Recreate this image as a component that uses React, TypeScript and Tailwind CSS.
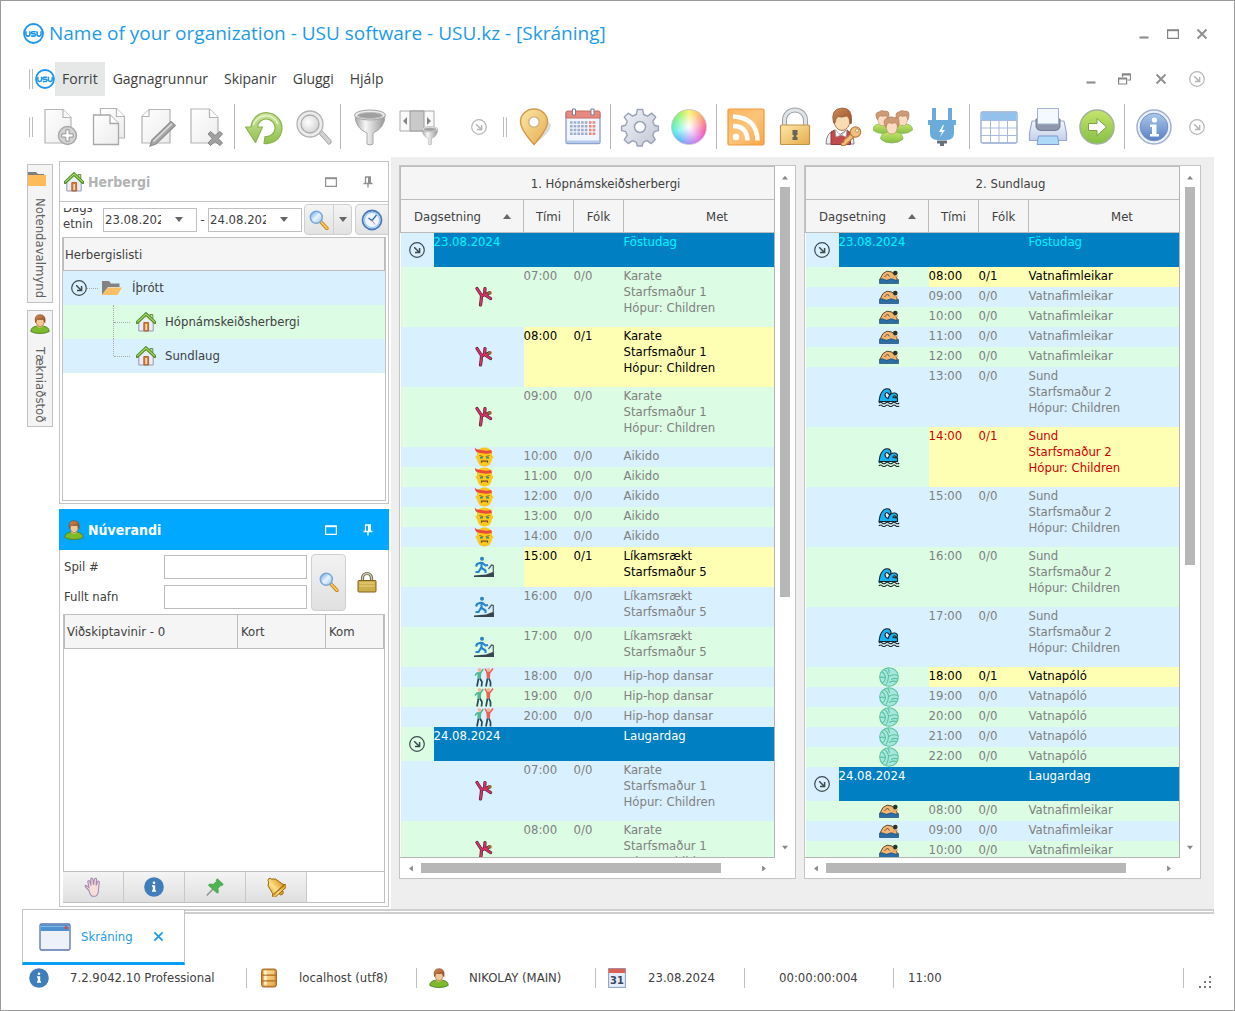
import React from 'react';
import clsx from 'clsx';

type IconProps = { className?: string };

/* ---------- small glyphs ---------- */

const UsuLogo = ({ className = 'size-5' }: IconProps) => (
  <svg viewBox="0 0 20 20" className={className} aria-hidden="true">
    <circle cx="10" cy="10" r="9" fill="#fff" stroke="#1e96ee" strokeWidth="1.8" />
    <g fill="none" stroke="#1e96ee" strokeWidth="1.5">
      <path d="M2.8 7.8v3q0 1.7 1.9 1.7t1.9-1.7v-3" />
      <path d="M12.2 8.3H9.2q-1.4.1-1.3 1.1t1.3.9h1.4q1.5.1 1.4 1.1t-1.4 1.1H7.8" />
      <path d="M13.4 7.8v3q0 1.7 1.9 1.7t1.9-1.7v-3" />
    </g>
  </svg>
);

const CircleArrow = ({ className = 'size-4 text-[#b5b5b5]' }: IconProps) => (
  <svg viewBox="0 0 16 16" className={className} fill="none" stroke="currentColor" aria-hidden="true">
    <circle cx="8" cy="8" r="7.3" strokeWidth="1.2" />
    <path d="M5.2 5.2l5 5M10.6 6v4.6H6" strokeWidth="1.5" />
  </svg>
);

const Minimize = () => (
  <svg viewBox="0 0 12 12" className="size-3" aria-hidden="true"><path d="M1.5 9.5h9" stroke="#909090" strokeWidth="2.2" /></svg>
);

const Maximize = ({ className = 'w-3 h-[10px]' }: IconProps) => (
  <svg viewBox="0 0 12 10" className={className} fill="none" stroke="currentColor" aria-hidden="true">
    <path d="M.6 1.5v7.9h10.8V1.5" strokeWidth="1.2" /><path d="M0 1.2h12" strokeWidth="2" />
  </svg>
);

const Restore = () => (
  <svg viewBox="0 0 13 12" className="h-3 w-[13px]" fill="none" stroke="#858585" aria-hidden="true">
    <path d="M4.5 4V1h8v6H9.5" strokeWidth="1.2" /><path d="M4 1.4h9M0 5.4h9" strokeWidth="2" />
    <path d="M.6 5v6h8V5" strokeWidth="1.2" />
  </svg>
);

const Close = ({ className = 'size-3 text-[#909090]' }: IconProps) => (
  <svg viewBox="0 0 12 12" className={className} stroke="currentColor" aria-hidden="true">
    <path d="M1.5 1.5l9 9M10.5 1.5l-9 9" strokeWidth="2" />
  </svg>
);

const Pin = ({ className = 'text-[#909090]' }: IconProps) => (
  <svg viewBox="0 0 10 12" className={clsx('h-3 w-[10px]', className)} aria-hidden="true">
    <path d="M2 1h6M2.500 1v6M.5 7.500h9M5 8v3.500" stroke="currentColor" strokeWidth="1.300" fill="none" />
    <path d="M5 1h3v6H5z" fill="currentColor" />
  </svg>
);

const Arrow = ({ className = 'w-2' }: IconProps) => (
  <svg viewBox="0 0 8 5" className={clsx('h-[5px] shrink-0', className)} aria-hidden="true"><path d="M0 0h8L4 5z" fill="currentColor" /></svg>
);

/* ---------- coloured icons ---------- */

const Defs = () => (
  <svg className="absolute size-0" aria-hidden="true">
    <defs>
      <linearGradient id="page" x2="1" y2="1"><stop stopColor="#fff" /><stop offset="1" stopColor="#ececec" /></linearGradient>
      <linearGradient id="steel"><stop stopColor="#a5a5a5" /><stop offset=".35" stopColor="#f6f6f6" /><stop offset="1" stopColor="#969696" /></linearGradient>
      <linearGradient id="green" x2="0" y2="1"><stop stopColor="#cde4a0" /><stop offset="1" stopColor="#8fc04c" /></linearGradient>
      <linearGradient id="gold" x2="1" y2="1"><stop stopColor="#fde7a8" /><stop offset="1" stopColor="#e5ad4d" /></linearGradient>
      <linearGradient id="bell" x2="1"><stop stopColor="#e9a51f" /><stop offset=".4" stopColor="#ffe28a" /><stop offset="1" stopColor="#d48a12" /></linearGradient>
      <linearGradient id="orange" x2="1" y2="1"><stop stopColor="#fdb45c" /><stop offset=".5" stopColor="#fbc57b" /><stop offset="1" stopColor="#fca445" /></linearGradient>
      <linearGradient id="blue" x2="0" y2="1"><stop stopColor="#a9c8ec" /><stop offset="1" stopColor="#5a80c4" /></linearGradient>
      <linearGradient id="gear" x2="1" y2="1"><stop stopColor="#f1f3f8" /><stop offset="1" stopColor="#bfc6d3" /></linearGradient>
      <linearGradient id="lens" x2="1" y2="1"><stop stopColor="#5e9be0" /><stop offset=".5" stopColor="#e6f5ff" /><stop offset="1" stopColor="#8fc1ef" /></linearGradient>
      <linearGradient id="lime" x2="0" y2="1"><stop stopColor="#c5e46a" /><stop offset="1" stopColor="#86bf45" /></linearGradient>
      <linearGradient id="hair" x2="1" y2="1"><stop stopColor="#d38a55" /><stop offset="1" stopColor="#94502a" /></linearGradient>
      <linearGradient id="tray" x2="0" y2="1"><stop stopColor="#f5f7fc" /><stop offset="1" stopColor="#c3cee8" /></linearGradient>
      <radialGradient id="glass" cx=".4" cy=".4" r=".6"><stop stopColor="#fff" /><stop offset="1" stopColor="#d6d6d6" /></radialGradient>
      <radialGradient id="white" cx=".5" cy=".5" r=".5"><stop stopColor="#fff" /><stop offset=".25" stopColor="#fff" stopOpacity=".8" /><stop offset="1" stopColor="#fff" stopOpacity=".15" /></radialGradient>
    </defs>
  </svg>
);

const Tool = ({ children }: { children: React.ReactNode }) => (
  <svg viewBox="0 0 40 40" className="size-10" fill="none" aria-hidden="true">{children}</svg>
);

const NewPage = () => (
  <Tool>
    <path d="M5 2.5h18l8 8V36H5z" fill="url(#page)" stroke="#b4b4b4" strokeWidth="1.2" />
    <path d="M23 2.5v8h8" fill="#fff" stroke="#b4b4b4" strokeWidth="1.2" />
    <circle cx="27.5" cy="28.5" r="9" fill="#d2d2d2" stroke="#a8a8a8" strokeWidth="1.4" />
    <path d="M25.9 22.8h3.2v4.1h4.1v3.2h-4.1v4.1h-3.2v-4.1h-4.1v-3.2h4.1z" fill="#fff" stroke="#949494" />
  </Tool>
);

const CopyPage = () => (
  <Tool>
    <path d="M11.5 1.5h16l8 8V31h-24z" fill="url(#page)" stroke="#b4b4b4" strokeWidth="1.2" />
    <path d="M27.5 1.5v8h8" fill="#fff" stroke="#b4b4b4" strokeWidth="1.2" />
    <path d="M4.5 8h16.500l8.500 8.500V37.500h-25z" fill="url(#page)" stroke="#a8a8a8" strokeWidth="1.3" />
    <path d="M21 8v8.500h8.500" fill="#fff" stroke="#a8a8a8" strokeWidth="1.3" />
  </Tool>
);

const EditPage = () => (
  <Tool>
    <path d="M11 2.5h21V36H4V9.500z" fill="url(#page)" stroke="#b4b4b4" strokeWidth="1.2" />
    <path d="M11 2.5v7H4" fill="#fff" stroke="#b4b4b4" strokeWidth="1.2" />
    <path d="M33 14.500l4.200 4L18 37l-6 2 1.800-6z" fill="#a8a8a8" stroke="#8e8e8e" strokeWidth="1.2" />
    <path d="M34 16.500L15.500 34.500" stroke="#dedede" strokeWidth="1.5" />
  </Tool>
);

const DeletePage = () => (
  <Tool>
    <path d="M4 2h18.500l8.500 8.500V36H4z" fill="url(#page)" stroke="#b4b4b4" strokeWidth="1.2" />
    <path d="M22.500 2v8.500H31" fill="#fff" stroke="#b4b4b4" strokeWidth="1.2" />
    <path d="M23.500 24.500l4.500 4 5-4 2.500 2.500-4.200 4.500 4.200 4.500-2.500 2.500-5-4-4.500 4-2.500-2.500 4.200-4.500-4.200-4.500z" fill="#a0a0a0" stroke="#858585" />
  </Tool>
);

const Refresh = () => (
  <Tool>
    <path d="M7 20A15.500 15.500 0 1 1 20 36.500L21 29.500A8.800 8.800 0 1 0 13.500 20H18.500L11.500 35.500 1.500 20z" fill="url(#green)" stroke="#8db251" strokeWidth="1.2" strokeLinejoin="round" />
    <path d="M9.500 18A13 13 0 0 1 34 17" stroke="#e4f2c5" strokeWidth="1.500" />
  </Tool>
);

const Search = () => (
  <Tool>
    <path d="M24.500 25l3-3L38 33.500q1 3-2.200 4z" fill="#d0d0d0" stroke="#a5a5a5" />
    <circle cx="17" cy="17" r="13" fill="#ececec" stroke="#b3b3b3" strokeWidth="1.3" />
    <circle cx="17" cy="17" r="9" fill="url(#glass)" stroke="#ababab" strokeWidth="1.3" />
  </Tool>
);

const FunnelShape = () => (
  <>
    <path d="M5 8q0 13 12 18v11q3 2 6 0V26q12-5 12-18z" fill="url(#steel)" stroke="#a8a8a8" />
    <ellipse cx="20" cy="8" rx="15.500" ry="5" fill="#ececec" stroke="#a5a5a5" />
    <ellipse cx="20" cy="8.500" rx="12.500" ry="3" fill="#a0a0a0" stroke="#bbb" />
  </>
);

const Funnel = () => <Tool><FunnelShape /></Tool>;

const FilterPanel = () => (
  <Tool>
    <path d="M1 4h34v20H1z" fill="#fafafa" stroke="#aaa" />
    <path d="M11 4h14v20H11z" fill="#c9c9c9" stroke="#999" />
    <path d="M8 10v8l-4-4zM28 10v8l4-4z" fill="#858585" />
    <g transform="translate(20.500 18) scale(.52)"><FunnelShape /></g>
  </Tool>
);

const MapPin = () => (
  <Tool>
    <path d="M20 37q16-10 17-19-3-5-9-6z" fill="#b8b8b8" opacity=".5" />
    <path d="M20 37.500Q6.500 22.500 6.500 14.500a13.500 12.500 0 0 1 27 0Q33.500 22.500 20 37.500z" fill="url(#gold)" stroke="#cf9a48" strokeWidth="1.4" />
    <circle cx="20" cy="15" r="5.200" fill="#fff" stroke="#cbb185" strokeWidth="1.3" />
  </Tool>
);

const CalendarIcon = () => (
  <Tool>
    <rect x="3" y="5" width="34" height="31.500" rx="1.500" fill="#f1f5fd" stroke="#8fa4cc" strokeWidth="1.4" />
    <path d="M3 10V5.500q0-1.500 1.500-1.500h31Q37 4 37 5.500V11H3z" fill="#e8897e" stroke="#c96d65" />
    <path d="M3.700 33.500h32.600v2.500H3.700z" fill="#b5c9ec" />
    <path d="M7 15.500h18M7 19.200h18M7 23h18M7 26.700h18" stroke="#9eacd0" strokeWidth="2.500" strokeDasharray="2.600 1.100" />
    <path d="M26 15.500h6.500M26 19.200h6.500M26 23h6.500M26 26.700h6.500" stroke="#ee8577" strokeWidth="2.500" strokeDasharray="2.600 1.100" />
    <path d="M9.500 2h3v6h-3zM28 2h3v6h-3z" fill="#fff" stroke="#747f91" />
  </Tool>
);

const Gear = () => (
  <Tool>
    <path d="M17.300 2.500h5.400l1 5 3.800 1.600 4.300-2.900 3.900 3.900-2.900 4.300 1.600 3.800 4 1v4.400l-4 1-1.600 3.800 2.400 4.300-3.900 3.900-4.300-2.900-3.800 1.600-1 3.700h-4.900l-1-3.700-3.800-1.600-4.300 2.900-3.900-3.900 2.900-4.300-1.600-3.800-4-1v-4.400l4-1 1.600-3.800-2.900-4.300 3.900-3.900 4.300 2.900 3.800-1.600z" fill="url(#gear)" stroke="#9aa3b5" strokeWidth="1.4" strokeLinejoin="round" />
    <circle cx="20" cy="20" r="5.500" fill="#fff" stroke="#9aa3b5" strokeWidth="1.5" />
  </Tool>
);

const ColorWheel = () => (
  <span className="grid size-9 rounded-full border border-[#d8c4d4] bg-[conic-gradient(#f5f04d,#ffb04d,#f76a6a,#f0389e,#d45ae0,#8f7cf5,#38a8f5,#2de8df,#45ee8b,#88f04b,#f5f04d)]">
    <svg viewBox="0 0 36 36" className="size-full" aria-hidden="true"><circle cx="18" cy="18" r="18" fill="url(#white)" /></svg>
  </span>
);

const Rss = () => (
  <Tool>
    <rect x="2" y="2" width="36" height="36" rx="1.500" fill="url(#orange)" stroke="#ee993f" strokeWidth="1.2" />
    <circle cx="10" cy="30" r="3.200" fill="#fff" />
    <path d="M7 19q14 0 14.500 14.500M7 9.500q24 1 24.500 24" stroke="#fff" strokeWidth="4.5" />
  </Tool>
);

const Padlock = () => (
  <Tool>
    <path d="M9.500 19v-6a10.500 10 0 0 1 21 0v6" stroke="#9aa0a6" strokeWidth="5" />
    <path d="M9.500 19v-6a10.500 10 0 0 1 21 0v6" stroke="#dfe3e6" strokeWidth="3" />
    <rect x="5.500" y="18" width="29" height="19.500" rx="1" fill="url(#gold)" stroke="#c0944a" strokeWidth="1.2" />
    <path d="M17.500 23h5v5h-1.200v2H22.500v3h-5v-3h1.200v-2h-1.200z" fill="#6b6558" />
  </Tool>
);

const UserKey = () => (
  <Tool>
    <path d="M2 37q0-11 8-13.500l6 4 6-4q8 1.500 8 13.500z" fill="#eceff4" stroke="#85858c" />
    <path d="M7 37.500V25l4-2 6 6 6-6 3.500 3v11.500z" fill="#c04a4e" stroke="#963a3f" />
    <path d="M11 22.500l6 6 6-6-1 7.500-5-2-5 2z" fill="#fff" stroke="#9c9c9c" strokeWidth=".7" />
    <ellipse cx="18" cy="13.500" rx="8" ry="10" fill="#f9dbb4" stroke="#b07b4e" />
    <path d="M9.500 16Q6 2 17.500 1t10 15q-1 2-1.500 0-.5-5-3-7-5 2-9 .5-2.500 2-3 6.500z" fill="url(#hair)" stroke="#8a5633" strokeWidth=".6" />
    <path d="M27 27l3 3-9 8.500h-3.500v-2.500l2.500-1v-2z" fill="#f3c07c" stroke="#b98140" strokeWidth="1.1" />
    <circle cx="31.500" cy="25" r="5.200" fill="#f3c07c" stroke="#b98140" strokeWidth="1.2" />
    <circle cx="33" cy="23.500" r="1.600" fill="#fff" stroke="#b98140" strokeWidth=".8" />
  </Tool>
);

const UserGroup = () => (
  <Tool>
    {[[2, 2, 0.7], [22, 2, 0.7], [10, 8, 0.8]].map(([x, y, s]) => (
      <g key={x} transform={`translate(${x} ${y}) scale(${s})`}>
        <path d="M-3 30q0-7 8-8.500h12q8 1.500 8 8.500-5 5-14 5T-3 30z" fill="url(#lime)" stroke="#86b552" />
        <path d="M4 9q-1 10 4 14.500h6Q19 19 18 9z" fill="#fbdcc3" stroke="#c79b78" />
        <path d="M3.500 15.500Q-2 5 6 4q4-3 7-1 8-1 7 6 0 4-1.500 6.500-1-4-3-6-5 2-8 0-3 2-4 6z" fill="#cf9a76" stroke="#ad7a56" strokeWidth=".8" />
      </g>
    ))}
  </Tool>
);

const Plug = () => (
  <Tool>
    <path d="M12 1v14M28 1v14" stroke="#6aabd9" strokeWidth="4" />
    <path d="M6 13h28v5h-2v8q0 7-7 7H15q-7 0-7-7v-8H6z" fill="#6aabd9" />
    <path d="M15 33.500h10v3h-3V39h-4v-2.500h-3z" fill="#66717b" />
    <path d="M21 18l-4 7h3l-2 5 5-7h-3l2-5z" fill="#fff" />
  </Tool>
);

const GridIcon = () => (
  <Tool>
    <rect x="2" y="5" width="36" height="31" rx="1.500" fill="#fff" stroke="#94a8d2" strokeWidth="1.3" />
    <path d="M2.600 5.600h34.800V13H2.600z" fill="#8fc2ec" />
    <path d="M11.500 5v31M20 5v31M28.500 5v31M2 13.500h36M2 21h36M2 28.500h36" stroke="#a9b9de" />
  </Tool>
);

const Printer = () => (
  <Tool>
    <path d="M4 14h32l2.500 12v7.500h-37V26z" fill="url(#tray)" stroke="#9aa9cd" strokeWidth="1.2" strokeLinejoin="round" />
    <path d="M8 12h24v8q-1 3.500-5 3.500H13q-4 0-5-3.500z" fill="#8e97ad" stroke="#727c94" />
    <path d="M9.500 1.500h21V17h-21z" fill="#f4f8ff" stroke="#a4b1d0" />
    <path d="M10.500 29h19l1.500 8.500H9z" fill="#aedaf8" stroke="#7f9ac8" />
  </Tool>
);

const GoNext = () => (
  <Tool>
    <circle cx="20" cy="20" r="17" fill="url(#lime)" stroke="#a1b2a1" strokeWidth="1.5" />
    <path d="M11.500 16.500H20V11.500l9.500 8.500L20 28.500v-5h-8.500z" fill="#fff" stroke="#7ba347" />
  </Tool>
);

const InfoBig = () => (
  <Tool>
    <circle cx="20" cy="20" r="17" fill="#edf1f8" stroke="#a3b1d0" strokeWidth="1.5" />
    <circle cx="20" cy="20" r="13.800" fill="url(#blue)" stroke="#7690c2" />
    <circle cx="20.500" cy="13" r="2.600" fill="#fff" />
    <path d="M16 17.500h6.500v9.500H25v2.500h-9V27h2v-7h-2z" fill="#fff" />
  </Tool>
);

const InfoSmall = () => (
  <svg viewBox="0 0 20 20" className="size-5" aria-hidden="true">
    <circle cx="10" cy="10" r="9.800" fill="#3f7ebb" />
    <circle cx="10" cy="5.800" r="1.300" fill="#fff" /><path d="M8 8.300h3.200v5H12V14.800H8v-1.500h.8V9.800H8z" fill="#fff" />
  </svg>
);

const House = () => (
  <svg viewBox="0 0 20 20" className="size-5 shrink-0" aria-hidden="true">
    <path d="M14 2.500h2.800v5H14z" fill="#c9dca5" stroke="#4f7b26" strokeWidth=".8" />
    <path d="M2.800 9.500L10 3l7.200 6.500V19H2.800z" fill="#e9edf7" stroke="#8e9bb6" />
    <path d="M1.200 10.300L10 2l8.800 8.300" fill="none" stroke="#4a8a22" strokeWidth="3.200" strokeLinecap="round" />
    <path d="M1.500 9.900L10 2l8.500 7.900" fill="none" stroke="#a9dc66" strokeWidth="1.200" strokeLinecap="round" />
    <path d="M7.800 10.500h4.800v8.500H7.800z" fill="#dd7a35" stroke="#a9521f" strokeWidth=".8" /><path d="M9.300 12h1.800v6H9.300z" fill="#fbdcb0" />
  </svg>
);

const UserIcon = ({ className = 'size-5' }: IconProps) => (
  <svg viewBox="0 0 20 20" className={className} aria-hidden="true">
    <path d="M.8 17.500q0-4.500 5.700-5.300h7q5.700.8 5.700 5.300-3.500 2-9.200 2t-9.200-2z" fill="#7fb92c" stroke="#4d7f1d" strokeWidth=".9" />
    <path d="M6.800 12q3 3.500 6.400 0l-1.200-2H8z" fill="#f4cf9b" />
    <path d="M5.800 5q0 7 4.400 7.800Q14.500 12 14.500 5z" fill="#f5c795" stroke="#a5622c" strokeWidth=".7" />
    <path d="M5.500 8.500Q3.800.8 10 .7t5 7.800Q13.800 8 13.500 5 10 6 7.500 5q-1 1-2 3.500z" fill="url(#hair)" stroke="#7c431c" strokeWidth=".6" />
  </svg>
);

const Folder = () => (
  <svg viewBox="0 0 18 14" className="h-[14px] w-[18px] self-start" aria-hidden="true">
    <path d="M0 0h8l2 2h6v3H0z" fill="#7e7e7e" /><path d="M0 3h18v11H0z" fill="#fdbc57" />
  </svg>
);

const FolderOpen = () => (
  <svg viewBox="0 0 20 14" className="h-[14px] w-5 shrink-0" aria-hidden="true">
    <path d="M0 14V0h7l2 2.500h8.500V6H6L0 14z" fill="#838383" /><path d="M6 6.500h14L15.500 14H0z" fill="#fdbf63" />
  </svg>
);

const SearchColor = ({ className = 'size-5' }: IconProps) => (
  <svg viewBox="0 0 20 20" className={clsx('shrink-0', className)} aria-hidden="true">
    <path d="M11.500 11.500l6.500 7" stroke="#c28120" strokeWidth="3.400" strokeLinecap="round" />
    <path d="M12 12l6 6.400" stroke="#ffcd58" strokeWidth="1.7" strokeLinecap="round" />
    <circle cx="7.300" cy="7.300" r="6" fill="url(#lens)" stroke="#77a6dc" strokeWidth="1.500" />
  </svg>
);

const Clock = () => (
  <svg viewBox="0 0 22 22" className="size-[22px] shrink-0" aria-hidden="true">
    <circle cx="11" cy="11" r="9.500" fill="#edf6ff" stroke="#4a7ab8" strokeWidth="1.8" />
    <circle cx="11" cy="11" r="7.600" fill="none" stroke="#9cc6ed" strokeWidth="1.200" />
    <path d="M15.500 6L11 11.500 7.500 9" stroke="#376bac" strokeWidth="1.300" fill="none" /><path d="M11 11.500l3 4" stroke="#e18383" />
  </svg>
);

const LockSmall = () => (
  <svg viewBox="0 0 20 22" className="h-[22px] w-5" aria-hidden="true">
    <path d="M5.500 11V7a4.500 4.500 0 0 1 9 0v4" fill="none" stroke="#6e6742" strokeWidth="3.200" />
    <path d="M5.500 11V7a4.500 4.500 0 0 1 9 0v4" fill="none" stroke="#cfcdbd" strokeWidth="1.300" />
    <rect x="1" y="9.500" width="18" height="11.500" rx="1" fill="#ceae4b" stroke="#7e641b" />
    <path d="M2.500 12h15M2.500 15h15" stroke="#e8d58d" />
  </svg>
);

const Hand = () => (
  <svg viewBox="0 0 18 20" className="h-5 w-[18px]" aria-hidden="true">
    <path d="M5 13.500L1.500 10q-1-2 .8-1.500L5 10.500 3.800 4.500q.5-1.800 1.800-.4L7 8.500 6.800 2q1-1.800 2 0L9.500 8l1-6q1.300-1.500 2 0l-.4 6.500 1.500-4q1.500-1 1.700.6L14.500 12q0 6-3 7.300H8Q6 18 5 13.500z" fill="#f6dfd9" stroke="#a78bb4" strokeWidth="1.100" />
  </svg>
);

const PushPin = () => (
  <svg viewBox="0 0 18 18" className="size-[18px]" aria-hidden="true">
    <path d="M7 11L.8 17.500" stroke="#929292" strokeWidth="1.500" />
    <path d="M11.500.8l5.800 5.500-1.600 1.600-1-.4-2.700 3 .4 4-1.400.6L2.500 7.500 3.300 6l4 .2 3.300-2.900-.6-1.200z" fill="#50b253" stroke="#3a993f" strokeWidth=".6" />
  </svg>
);

const Bell = () => (
  <svg viewBox="0 0 20 20" className="size-5" aria-hidden="true">
    <g transform="rotate(-42 10 10)">
      <circle cx="10" cy="17.500" r="2.300" fill="#e6a02b" stroke="#98600d" strokeWidth=".8" />
      <path d="M10-1q2 0 2 2.200 4 1.500 4 7.300 0 4 3.500 7.500v1H.5v-1Q4 12.500 4 8.500 4 2.700 8 1.200 8-1 10-1z" fill="url(#bell)" stroke="#98600d" strokeWidth=".9" />
      <path d="M3 14h14" stroke="#a5690f" strokeWidth="1.200" />
    </g>
  </svg>
);

const Database = () => (
  <svg viewBox="0 0 18 20" className="h-5 w-[18px]" aria-hidden="true">
    <path d="M1.500 3.500q0-2.500 2-2.500h11q2 0 2 2.500v13q0 2.500-2 2.500h-11q-2 0-2-2.500z" fill="#d98d3a" stroke="#a3601c" strokeWidth=".9" />
    <path d="M3.500 2.500h11v4h-11zM3.500 7.800h11v4.400h-11zM3.500 13.500h11v4h-11z" fill="url(#gold)" />
    <path d="M5.500 2.500v15" stroke="#fff8d8" strokeWidth="2.500" opacity=".8" />
    <path d="M2 7.200h14M2 12.900h14" stroke="#b06d20" />
  </svg>
);

const Calendar31 = () => (
  <svg viewBox="0 0 18 20" className="h-5 w-[18px]" aria-hidden="true">
    <rect x=".6" y=".6" width="16.800" height="18.800" fill="#e6eefb" stroke="#8c9cc0" />
    <path d="M.6.600h16.800V5H.6z" fill="#dc6155" />
    <text x="9" y="16" textAnchor="middle" fontSize="11" fontWeight="bold" fill="#3b4660">31</text>
  </svg>
);

const WindowIcon = () => (
  <svg viewBox="0 0 32 28" className="h-7 w-8" aria-hidden="true">
    <rect x="1" y="1" width="30" height="26" rx="1.500" fill="#edf1f9" stroke="#5b72ab" strokeWidth="1.3" />
    <path d="M1.700 1.700h28.600V8H1.700z" fill="#4e93d0" /><path d="M1.700 3.500h28.600" stroke="#83b9e6" />
    <circle cx="27" cy="4.500" r="1.500" fill="#e0443c" />
  </svg>
);

/* ---------- sport icons ---------- */

const karatePose = 'M2 2.500l4.500 7M10 2.500l-.5 6-3 1.500-.3 4-.7 5M9.500 8.500l6 4M10.500 9l3.500-2';

const Karate = () => (
  <svg viewBox="0 0 18 22" className="h-[22px] w-[18px]" fill="none" strokeLinecap="round" strokeLinejoin="round" aria-hidden="true">
    <path d={karatePose} stroke="#4a2438" strokeWidth="3.200" />
    <path d={karatePose} stroke="#dd2f68" strokeWidth="1.900" />
    <circle cx="14.800" cy="6.800" r="1.900" fill="#8f6a2e" />
  </svg>
);

const Aikido = () => (
  <svg viewBox="0 0 20 20" className="size-5" aria-hidden="true">
    <path d="M3 6Q4 .5 10.500.500T18 6v2.500q1.500 0 1.300 1.500T18 12q-1 7.500-7.500 7.500T3 12q-1.300-.5-1.500-2T3 8.500z" fill="#fcc71f" />
    <path d="M.8.800q1.500 2.200 4 1.700 6 2 12.500.5l.5 3Q10.500 7.500 4 5.500 1 5 .8.800z" fill="#ee4a38" />
    <path d="M5.500 8.500l3.800 1.300M15.500 8.500l-3.800 1.300" stroke="#8a7a28" strokeWidth="1.1" />
    <path d="M6 10.800h2.800M12.200 10.800H15" stroke="#2f8f80" strokeWidth="1.5" />
    <path d="M7.500 15.800v-1.600h6v1.600" fill="none" stroke="#7a5317" strokeWidth="1.2" />
  </svg>
);

const Treadmill = () => (
  <svg viewBox="0 0 22 22" className="size-[22px]" fill="none" aria-hidden="true">
    <circle cx="9" cy="2.800" r="2" fill="#2585cf" />
    <path d="M8.500 6v6l4 2.500V17M8.500 11l-3 5H2.500M8.500 6.500L4 8 3 10.500M9 6.500l3.500 3 2.500-.5" stroke="#2585cf" strokeWidth="2.100" strokeLinejoin="round" />
    <path d="M1 21v-1.500L13 18.500 21 15.500V21z" fill="#38474f" /><path d="M20.300 17V9.500L18.500 9 15.500 13" stroke="#55626a" strokeWidth="1.300" />
  </svg>
);

const Dance = () => (
  <svg viewBox="0 0 20 20" className="size-5" fill="none" strokeLinejoin="round" aria-hidden="true">
    <circle cx="5.500" cy="3" r="1.900" fill="#f3b79c" /><circle cx="14.500" cy="3" r="1.900" fill="#f3b79c" />
    <path d="M1 8.500l2-2.500h3.500l2.800-4" stroke="#52b894" strokeWidth="1.500" />
    <path d="M3.300 5.500h4l-.5 6H3.500z" fill="#52b894" />
    <path d="M11 1.500l2 4h3L19 1.500" stroke="#ea6054" strokeWidth="1.500" />
    <path d="M12.300 5.500h4l-.3 6h-3.200z" fill="#ea6054" />
    <path d="M4.500 11.500L3 19.500M6 11.500l2 3.500-.5 4.500M13.500 11.500L12 19.500M15 11.500l1.500 3.500v4.500" stroke="#26485a" strokeWidth="1.700" />
  </svg>
);

const Swimmer = () => (
  <svg viewBox="0 0 20 14" className="h-[14px] w-5" aria-hidden="true">
    <path d="M.8 9.500L4 3.500 8 1.200l5 .8 3 3.500L18 8v2.500H2z" fill="#efb676" stroke="#4e3b23" strokeWidth=".9" strokeLinejoin="round" />
    <path d="M5.500 7l3-3 2 2.500" fill="none" stroke="#4e3b23" strokeWidth=".8" />
    <circle cx="16.300" cy="3" r="2.300" fill="#2b3328" />
    <path d="M13.500 6.500q3 1.500 5-1" stroke="#e9a765" strokeWidth="1.800" fill="none" />
    <path d="M.5 9.500q2.500-1.500 4.800 0t4.700 0 4.700 0 4.800 0V13.500H.5z" fill="#2a6ea5" stroke="#1d4c70" strokeWidth=".7" />
  </svg>
);

const Wave = () => (
  <svg viewBox="0 0 22 20" className="h-5 w-[22px]" aria-hidden="true">
    <path d="M1 14.500Q2 8 3 6.500 6 .5 11 2q3 2 1.500 5-2 1-2.500-1-2.500-1-3 1.500 0 3 3 4 2-6 7-5.500 3.500 1 2 4-2 .5-2-1-2-.5-2 1.500l4.500.5v3.500z" fill="#18b1f2" stroke="#15232d" strokeWidth="1.100" />
    <path d="M.8 16q1.700-1.500 3.400 0t3.400 0 3.400 0 3.400 0 3.400 0 3.400 0M.8 18.800q1.700-1.500 3.400 0t3.400 0 3.400 0 3.400 0 3.400 0 3.400 0" fill="none" stroke="#1b292f" strokeWidth="1.100" />
  </svg>
);

const Ball = () => (
  <svg viewBox="0 0 20 20" className="size-5" fill="none" aria-hidden="true">
    <circle cx="10" cy="10" r="9.300" fill="#a6e8df" stroke="#5ac39e" strokeWidth="1.100" />
    <path d="M9.500 9.500Q9 4.500 5 2.500M9.500 9.500q4.500-3 9.500-1M9.500 9.500q0 5-3 9M6.500 11Q6 6.500 2.500 4.500M10.500 6Q10.500 3 8.500.8M12 12.500q3.500-2 7-.5M10 15.500q4-2 7.500-1M3.500 16q2.500-2 3-5M.8 10.500Q3.500 9.500 6.500 11" stroke="#5ac39e" strokeWidth="1.100" />
  </svg>
);

/* ---------- schedule data ---------- */

type Lesson = { icon: () => React.ReactElement; time: string; people: string; lines: string[]; tone?: 'open' | 'alert' };
type Day = { date: string; day: string; current?: boolean };
type Row = Lesson | Day;

const karate = (time: string, people = '0/0'): Lesson => ({
  icon: Karate, time, people, lines: ['Karate', 'Starfsmaður 1', 'Hópur: Children'], tone: people === '0/1' ? 'open' : undefined,
});
const single = (icon: Lesson['icon'], name: string, times: string[]): Lesson[] =>
  times.map((time) => ({ icon, time, people: '0/0', lines: [name] }));
const fitness = (time: string): Lesson => ({ icon: Treadmill, time, people: '0/0', lines: ['Líkamsrækt', 'Starfsmaður 5'] });
const swim = (time: string): Lesson => ({ icon: Wave, time, people: '0/0', lines: ['Sund', 'Starfsmaður 2', 'Hópur: Children'] });

const hallRows: Row[] = [
  { date: '23.08.2024', day: 'Föstudag', current: true },
  karate('07:00'),
  karate('08:00', '0/1'),
  karate('09:00'),
  ...single(Aikido, 'Aikido', ['10:00', '11:00', '12:00', '13:00', '14:00']),
  { ...fitness('15:00'), people: '0/1', tone: 'open' },
  fitness('16:00'),
  fitness('17:00'),
  ...single(Dance, 'Hip-hop dansar', ['18:00', '19:00', '20:00']),
  { date: '24.08.2024', day: 'Laugardag' },
  karate('07:00'),
  karate('08:00'),
];

const poolRows: Row[] = [
  { date: '23.08.2024', day: 'Föstudag', current: true },
  { icon: Swimmer, time: '08:00', people: '0/1', lines: ['Vatnafimleikar'], tone: 'open' },
  ...single(Swimmer, 'Vatnafimleikar', ['09:00', '10:00', '11:00', '12:00']),
  swim('13:00'),
  { ...swim('14:00'), people: '0/1', tone: 'alert' },
  swim('15:00'),
  swim('16:00'),
  swim('17:00'),
  { icon: Ball, time: '18:00', people: '0/1', lines: ['Vatnapóló'], tone: 'open' },
  ...single(Ball, 'Vatnapóló', ['19:00', '20:00', '21:00', '22:00']),
  { date: '24.08.2024', day: 'Laugardag' },
  ...single(Swimmer, 'Vatnafimleikar', ['08:00', '09:00', '10:00']),
];

const rowHeights = ['h-5', 'h-10', 'h-[60px]'];

const ScheduleRow = ({ row, odd }: { row: Row; odd: boolean }) => {
  const stripe = odd ? 'bg-[#dcfce4]' : 'bg-[#d9f0ff]';
  if ('date' in row) {
    return (
      <tr className={clsx('h-[34px] align-top', row.current ? 'text-[#00f6ff]' : 'text-white')}>
        <td className={clsx('align-middle', stripe)}>
          <button aria-label={`Fella ${row.date}`} className="ml-2 block"><CircleArrow className="size-4 text-[#3c4a50]" /></button>
        </td>
        <td colSpan={3} className="bg-[#0080c2] pt-px">{row.date}</td>
        <td className="bg-[#0080c2] pt-px">{row.day}</td>
      </tr>
    );
  }
  const Icon = row.icon;
  const cell = clsx(
    'pt-px',
    !row.tone && 'text-[#808080]',
    row.tone && 'bg-[#ffffb3]',
    row.tone === 'open' && 'text-black',
    row.tone === 'alert' && 'text-[#cc0000]',
  );
  return (
    <tr className={clsx('align-top', rowHeights[row.lines.length - 1], stripe)}>
      <td colSpan={2} className="pl-[43px] align-middle"><span className="flex justify-center"><Icon /></span></td>
      <td className={cell}>{row.time}</td>
      <td className={cell}>{row.people}</td>
      <td className={cell}>{row.lines.map((line) => <div key={line}>{line}</div>)}</td>
    </tr>
  );
};

const Schedule = ({ title, rows, thumb }: { title: string; rows: Row[]; thumb: string }) => (
  <section className="flex min-w-0 flex-1 flex-col border border-[#c4c4c4] bg-white">
    <div className="flex min-h-0 flex-1">
      <div className="min-w-0 flex-1 overflow-hidden border-r border-b border-[#b4b4b4]">
        <table className="w-[411px] min-w-full table-fixed border-collapse text-[13px] leading-4">
          <colgroup>
            <col className="w-[33px]" /><col className="w-[90px]" /><col className="w-[50px]" /><col className="w-[50px]" /><col />
          </colgroup>
          <thead className="bg-[#f5f5f5] text-[#404040]">
            <tr className="h-[33px]"><th colSpan={5} className="border border-[#bcbcbc] p-0 pt-px font-normal">{title}</th></tr>
            <tr className="h-[33px]">
              <th colSpan={2} className="border border-[#bcbcbc] p-0 pt-px font-normal">
                <span className="flex items-center justify-between pr-[11px] pl-[13px]">Dagsetning<Arrow className="w-[10px] rotate-180 text-[#666]" /></span>
              </th>
              <th className="border border-[#bcbcbc] p-0 pt-px font-normal">Tími</th>
              <th className="border border-[#bcbcbc] p-0 pt-px font-normal">Fólk</th>
              <th className="border border-[#bcbcbc] p-0 pt-px font-normal">Met</th>
            </tr>
          </thead>
          <tbody>{rows.map((row, i) => <ScheduleRow key={i} row={row} odd={i % 2 === 1} />)}</tbody>
        </table>
      </div>
      <div className="flex w-5 flex-col items-center pt-[9px] pb-2 text-[#888]">
        <Arrow className="w-[6px] rotate-180" />
        <div className="my-[7px] w-[10px] flex-1"><div className={clsx('bg-[#b7b7b7]', thumb)} /></div>
        <Arrow className="w-[6px]" />
      </div>
    </div>
    <div className="flex h-5 items-center pr-7 pl-2 text-[#888]">
      <Arrow className="w-[6px] rotate-90" />
      <div className="mx-[7px] h-[10px] flex-1"><div className="h-full w-[90%] bg-[#b7b7b7]" /></div>
      <Arrow className="w-[6px] -rotate-90" />
    </div>
  </section>
);

/* ---------- chrome ---------- */

const Grip = ({ className = '' }: IconProps) => <span className={clsx('h-5 w-1 shrink-0 border-x border-[#bdbdbd]', className)} />;
const Separator = () => <span className="mx-[3px] h-[45px] w-[2px] shrink-0 border-l border-[#b5b5b5]" />;

const ToolButtons = ({ items }: { items: [string, () => React.ReactElement][] }) => (
  <>
    {items.map(([label, Icon]) => (
      <button key={label} aria-label={label} className="flex h-12 w-[49px] shrink-0 items-center justify-center"><Icon /></button>
    ))}
  </>
);

const Toolbar = () => (
  <div className="flex h-[61px] items-center pr-[29px] pl-7">
    <Grip />
    <span className="w-[2px]" />
    <ToolButtons items={[['Bæta við', NewPage], ['Afrita', CopyPage], ['Breyta', EditPage], ['Eyða', DeletePage]]} />
    <Separator />
    <ToolButtons items={[['Uppfæra', Refresh], ['Leita', Search]]} />
    <Separator />
    <ToolButtons items={[['Sía', Funnel], ['Síuspjald', FilterPanel]]} />
    <button aria-label="Fleiri skipanir" className="mr-4 ml-7"><CircleArrow /></button>
    <Grip />
    <span className="w-[2px]" />
    <ToolButtons items={[['Kort', MapPin], ['Dagatal', CalendarIcon]]} />
    <Separator />
    <ToolButtons items={[['Stillingar', Gear], ['Litir', ColorWheel]]} />
    <Separator />
    <ToolButtons items={[['Fréttir', Rss], ['Læsa', Padlock], ['Aðgangur', UserKey], ['Notendur', UserGroup], ['Tenging', Plug]]} />
    <Separator />
    <ToolButtons items={[['Tafla', GridIcon], ['Prenta', Printer], ['Áfram', GoNext]]} />
    <Separator />
    <ToolButtons items={[['Upplýsingar', InfoBig]]} />
    <button aria-label="Fleiri tól" className="ml-auto"><CircleArrow /></button>
  </div>
);

const SideTab = ({ icon, label, className }: { icon: React.ReactNode; label: string; className: string }) => (
  <button className={clsx('flex w-[26px] flex-col items-center justify-between border border-[#c2c2c2] bg-[#f4f4f4] pb-1 text-[#606060]', className)}>
    {icon}
    <span className="[writing-mode:vertical-rl]">{label}</span>
  </button>
);

const DateBox = ({ id, value }: { id: string; value: string }) => (
  <span className="flex h-6 w-[94px] shrink-0 items-center border border-[#c0c0c0] pl-px">
    <input id={id} defaultValue={value} className="w-14 outline-none" />
    <Arrow className="ml-[14px] w-2 text-[#666]" />
  </span>
);

const RoomsPanel = () => (
  <section className="flex h-[343px] shrink-0 flex-col border border-[#c4c4c4]">
    <header className="flex h-10 shrink-0 items-center border-b border-[#c4c4c4] pr-[15px] pl-1">
      <House />
      <h2 className="ml-1 flex-1 text-sm font-bold text-[#b3b3b3]">Herbergi</h2>
      <button aria-label="Stækka" className="mr-[26px]"><Maximize className="h-[10px] w-3 text-[#909090]" /></button>
      <button aria-label="Festa"><Pin /></button>
    </header>
    <div className="flex h-[35px] shrink-0 items-center overflow-hidden pl-[3px]">
      <label htmlFor="from" className="flex h-6 w-10 shrink-0 items-end overflow-hidden leading-4">Dags<br />etnin</label>
      <DateBox id="from" value="23.08.2024" />
      <label htmlFor="to" className="w-[11px] shrink-0 text-center">-</label>
      <DateBox id="to" value="24.08.2024" />
      <span className="ml-[2px] flex h-[31px] w-12 shrink-0 rounded-sm border border-[#cfcfcf] bg-linear-to-b from-[#f4f4f4] to-[#e2e2e2]">
        <button aria-label="Leita" className="flex w-[29px] items-center justify-center border-r border-[#cfcfcf]"><SearchColor /></button>
        <button aria-label="Leitarvalkostir" className="flex flex-1 items-center justify-center text-[#666]"><Arrow /></button>
      </span>
      <button aria-label="Tími" className="ml-[3px] flex h-[31px] w-9 shrink-0 items-center rounded-l-sm border border-[#cfcfcf] bg-linear-to-b from-[#f4f4f4] to-[#e2e2e2] pl-[5px]"><Clock /></button>
    </div>
    <div className="mx-[2px] mb-[2px] flex-1 border border-[#c0c0c0]">
      <div className="flex h-[33px] items-center border border-t-0 border-[#bcbcbc] bg-[#f5f5f5] px-px pt-px">Herbergislisti</div>
      <ul>
        <li className="flex h-[34px] items-center bg-[#d9f0ff] pl-2">
          <button aria-label="Fella Íþrótt"><CircleArrow className="size-4 text-[#3c4a50]" /></button>
          <span className="mr-1 w-[11px] border-t border-dotted border-[#aaa]" />
          <FolderOpen /><span className="ml-[10px]">Íþrótt</span>
        </li>
        {['Hópnámskeiðsherbergi', 'Sundlaug'].map((room, i) => (
          <li key={room} className={clsx('flex h-[34px] items-center', i ? 'bg-[#d9f0ff]' : 'bg-[#dcfce4]')}>
            <span className={clsx('ml-[50px] w-px self-start border-l border-dotted border-[#aaa]', i ? 'h-[17px]' : 'h-[34px]')} />
            <span className="mr-[6px] w-4 border-t border-dotted border-[#aaa]" />
            <House /><span className="ml-[9px]">{room}</span>
          </li>
        ))}
      </ul>
    </div>
  </section>
);

const CurrentPanel = () => (
  <section className="mt-[5px] mb-[2px] flex min-h-0 flex-1 flex-col border border-t-0 border-[#c4c4c4]">
    <header className="-mx-px flex h-[41px] shrink-0 items-center bg-[#00a8ff] pr-4 pl-[5px] text-white">
      <UserIcon />
      <h2 className="ml-1 flex-1 text-sm font-bold">Núverandi</h2>
      <button aria-label="Stækka" className="mr-[26px]"><Maximize className="h-[10px] w-3 text-white" /></button>
      <button aria-label="Festa"><Pin className="text-white" /></button>
    </header>
    <div className="flex h-16 shrink-0 items-center px-1">
      <div className="grid flex-1 grid-cols-[100px_1fr] items-center gap-y-[6px]">
        <label htmlFor="card">Spil #</label>
        <input id="card" className="h-6 w-full min-w-0 border border-[#bcbcbc] px-1 outline-none" />
        <label htmlFor="name">Fullt nafn</label>
        <input id="name" className="h-6 w-full min-w-0 border border-[#bcbcbc] px-1 outline-none" />
      </div>
      <button aria-label="Leita" className="mx-1 flex h-[57px] w-[35px] items-center justify-center rounded-sm border border-[#cfcfcf] bg-linear-to-b from-[#f2f2f2] to-[#e0e0e0]"><SearchColor /></button>
      <button aria-label="Læsa" className="mx-[7px]"><LockSmall /></button>
    </div>
    <div className="mx-[3px] min-h-0 flex-1 border border-[#c0c0c0]">
      <table className="w-full table-fixed border-collapse">
        <thead>
          <tr className="h-[33px] bg-[#f5f5f5] text-left">
            <th className="w-[173px] border border-t-0 border-[#bcbcbc] px-[2px] pt-px font-normal">Viðskiptavinir - 0</th>
            <th className="w-[88px] border border-t-0 border-[#bcbcbc] px-[3px] pt-px font-normal">Kort</th>
            <th className="border border-t-0 border-[#bcbcbc] px-[3px] pt-px font-normal">Kom</th>
          </tr>
        </thead>
      </table>
    </div>
    <div className="mx-[3px] mb-[3px] flex h-[31px] shrink-0 border-r border-b border-[#c0c0c0]">
      {([['Stöðva', Hand], ['Upplýsingar', InfoSmall], ['Festa', PushPin], ['Áminning', Bell]] as const).map(([label, Icon]) => (
        <button key={label} aria-label={label} className="flex w-[61px] items-center justify-center border-r border-[#c8c8c8] bg-linear-to-b from-[#f4f4f4] to-[#dfdfdf]"><Icon /></button>
      ))}
    </div>
  </section>
);

const status = [
  { icon: <InfoSmall />, text: '7.2.9042.10 Professional', box: 'w-[218px]', gap: 'ml-[21px]' },
  { icon: <Database />, text: 'localhost (utf8)', box: 'w-[170px] pl-[13px]', gap: 'ml-[21px]' },
  { icon: <UserIcon />, text: 'NIKOLAY (MAIN)', box: 'w-[179px] pl-3', gap: 'ml-5' },
  { icon: <Calendar31 />, text: '23.08.2024', box: 'w-[149px] pl-3', gap: 'ml-[22px]' },
  { icon: null, text: '00:00:00:004', box: 'w-[149px] pl-[34px]', gap: '' },
  { icon: null, text: '11:00', box: 'flex-1 pl-[14px]', gap: '' },
];

const App = () => (
  <div className="flex h-screen flex-col border border-[#9b9b9b] bg-white font-['DejaVu_Sans_Condensed','DejaVu_Sans',sans-serif] text-[13px] text-[#404040]">
    <Defs />
    <header className="flex h-[61px] shrink-0 items-center pt-1 pr-[26px] pl-[22px] font-['Open_Sans',sans-serif]">
      <UsuLogo className="size-[21px]" />
      <h1 className="ml-[5px] flex-1 text-[19px] text-[#1e9be8]">Name of your organization - USU software - USU.kz - [Skráning]</h1>
      <button aria-label="Lágmarka" className="mr-[17px]"><Minimize /></button>
      <button aria-label="Hámarka" className="mr-[17px]"><Maximize className="h-[10px] w-3 text-[#858585]" /></button>
      <button aria-label="Loka"><Close /></button>
    </header>
    <nav className="flex h-[34px] shrink-0 items-center pr-[29px] pl-7 font-['Open_Sans',sans-serif] text-sm">
      <Grip className="mr-[2px]" />
      <UsuLogo className="size-5" />
      {['Forrit', 'Gagnagrunnur', 'Skipanir', 'Gluggi', 'Hjálp'].map((item, i) => (
        <button key={item} className={clsx('h-[34px]', i === 0 ? 'bg-[#e6e8e7] px-[7px]' : 'px-2')}>{item}</button>
      ))}
      <button aria-label="Lágmarka glugga" className="mr-[21px] ml-auto"><Minimize /></button>
      <button aria-label="Endurheimta" className="mr-6"><Restore /></button>
      <button aria-label="Loka glugga" className="mr-[22px]"><Close /></button>
      <button aria-label="Fleiri valkostir"><CircleArrow /></button>
    </nav>
    <Toolbar />
    <main className="flex min-h-0 flex-1 pr-5">
      <aside className="flex w-[58px] shrink-0 flex-col items-start gap-[7px] pt-[7px] pl-[26px]">
        <SideTab className="h-[139px] pt-[7px]" icon={<Folder />} label="Notendavalmynd" />
        <SideTab className="h-[117px] pt-[3px]" icon={<UserIcon />} label="Tækniaðstoð" />
      </aside>
      <div className="flex w-[330px] shrink-0 flex-col pt-1">
        <RoomsPanel />
        <CurrentPanel />
      </div>
      <div className="ml-[2px] flex min-w-0 flex-1 gap-2 bg-[#eee] pt-2 pr-[13px] pb-[30px] pl-2">
        <Schedule title="1. Hópnámskeiðsherbergi" rows={hallRows} thumb="h-[63%]" />
        <Schedule title="2. Sundlaug" rows={poolRows} thumb="h-[58%]" />
      </div>
    </main>
    <div className="mr-5 ml-[21px] flex h-14 shrink-0 text-[#1e9be8]">
      <div className="flex w-[163px] items-center border-x border-t border-b-3 border-[#c4c4c4] border-b-[#00a0f5] pt-px pl-4">
        <WindowIcon />
        <button className="ml-[10px]">Skráning</button>
        <button aria-label="Loka Skráning" className="ml-5"><Close className="size-[11px] text-[#1e9be8]" /></button>
      </div>
      <div className="h-[5px] flex-1 border-y-2 border-r border-[#cfcfcf]" />
    </div>
    <footer className="flex h-[45px] shrink-0 items-start pt-[3px] pr-[22px] pl-7">
      {status.map(({ icon, text, box, gap }) => (
        <div key={text} className={clsx('flex h-5 items-center border-r border-[#c0c0c0]', box)}>
          {icon}<span className={gap}>{text}</span>
        </div>
      ))}
      <svg viewBox="0 0 14 14" className="mt-2 ml-[14px] size-[14px]" fill="#777" aria-hidden="true">
        <path d="M11 0h2v2h-2zM6 5h2v2H6zM11 5h2v2h-2zM1 10h2v2H1zM6 10h2v2H6zM11 10h2v2h-2z" />
      </svg>
    </footer>
  </div>
);

export default App;
